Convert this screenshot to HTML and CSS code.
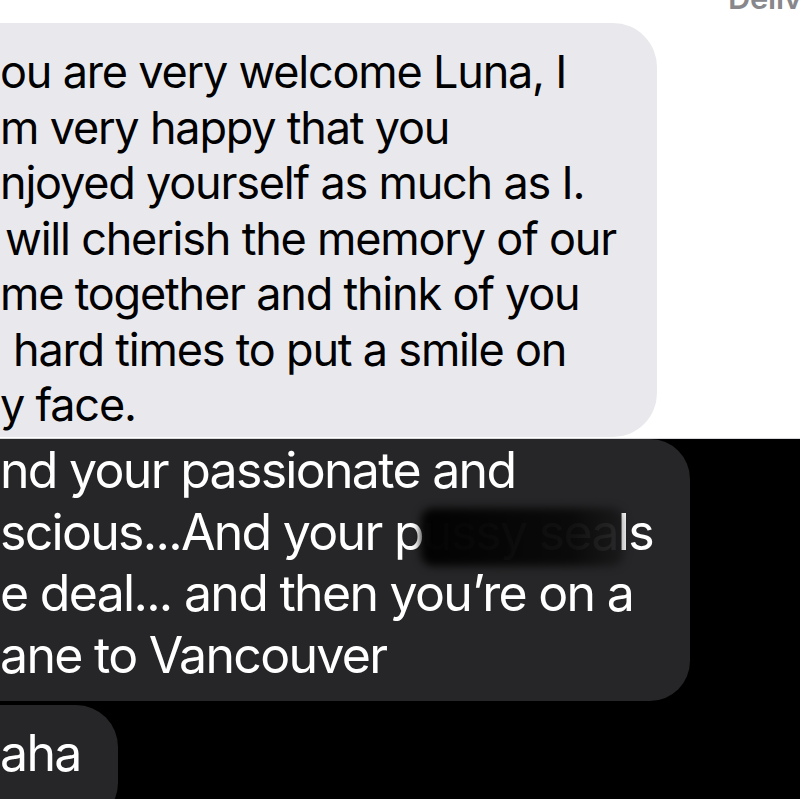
FILE: index.html
```html
<!DOCTYPE html>
<html lang="en">
<head>
    <meta charset="UTF-8">
    <meta name="viewport" content="width=device-width, initial-scale=1.0">
    <title>Messages</title>
    <link rel="stylesheet" href="styles.css">
</head>
<body>

    <!-- upper screenshot: light thread -->
    <div class="light">
        <div class="status"><span>Delivered</span></div>
        <div class="bubble bubble-light">
            <span class="line">ou are very welcome Luna, I</span>
            <span class="line">m very happy that you</span>
            <span class="line">njoyed yourself as much as I.</span>
            <span class="line indent-sm">will cherish the memory of our</span>
            <span class="line">me together and think of you</span>
            <span class="line indent-md">hard times to put a smile on</span>
            <span class="line">y face.</span>
        </div>
    </div>

    <!-- lower screenshot: dark thread -->
    <div class="dark">
        <div class="bubble bubble-dark bubble-long">
            <span class="line">nd your passionate and</span>
            <span class="line">scious...And your p<span class="smudge">ussy sea</span>ls</span>
            <span class="line">e deal... and then you’re on a</span>
            <span class="line">ane to Vancouver</span>
        </div>
        <div class="bubble bubble-dark bubble-short">
            <span class="line">aha</span>
        </div>
    </div>

</body>
</html>
```

FILE: styles.css
```css
body {
    margin: 0;
    width: 800px;
    height: 799px;
    overflow: hidden;
    font-family: Inter, "Noto Sans", sans-serif;
    background-color: #000;
}
.light {
    background-color: #fff;
    height: 438px;
    border-bottom: 1px solid #d8d8dc;
}
.status {
    height: 23px;
    padding-left: 728px;
    overflow: hidden;
    white-space: nowrap;
    display: flex;
    align-items: flex-end;
}
.status span {
    font-size: 31px;
    line-height: 31px;
    margin-bottom: 10px;
    color: #88888c;
    font-weight: 600;
    letter-spacing: -0.3px;
}
.line {
    display: block;
    white-space: nowrap;
}
.indent-sm {
    padding-left: 5px;
}
.indent-md {
    padding-left: 13px;
}
.bubble {
    box-sizing: border-box;
}
.bubble-light {
    width: 657px;
    height: 414px;
    padding-top: 21px;
    background-color: #e9e9ed;
    border-radius: 0 44px 44px 0;
    color: #000;
    font-size: 45px;
    line-height: 55.5px;
    letter-spacing: -1.2px;
}
.dark {
    display: flex;
    flex-direction: column;
    gap: 4px;
}
.bubble-dark {
    background-color: #262628;
    color: #fff;
    font-size: 50px;
    line-height: 61.7px;
    letter-spacing: -1.7px;
}
.bubble-long {
    width: 690px;
    height: 262px;
    padding-top: 1px;
    border-radius: 0 40px 40px 0;
}
.bubble-short {
    width: 118px;
    height: 120px;
    padding-top: 18px;
    border-radius: 0 42px 42px 0;
}
.smudge {
    position: relative;
    color: #3e3e40;
}
.smudge::after {
    content: "";
    position: absolute;
    left: -2px;
    right: -6px;
    top: 6px;
    bottom: -4px;
    background: linear-gradient(to right, rgba(0, 0, 0, 0.94), rgba(0, 0, 0, 0.72) 75%, rgba(0, 0, 0, 0.3));
    border-radius: 12px;
    filter: blur(4px);
}
```
